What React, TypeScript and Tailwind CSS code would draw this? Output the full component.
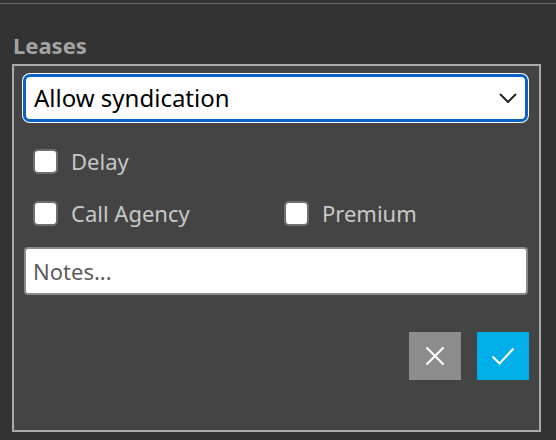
import { useState } from "react";

const Checkbox = ({ label }: { label: string }) => {
  const [checked, setChecked] = useState(false);
  return (
    <label className="flex items-center gap-[13px] cursor-pointer">
      <span
        onClick={() => setChecked(!checked)}
        className="w-[25px] h-[25px] rounded-[5px] bg-white border-2 border-[#6f6f6f] shrink-0"
      />
      <span className="text-[22px] leading-[30px] text-[#c8c8c8]">{label}</span>
    </label>
  );
};

export default function App() {
  return (
    <div
      className="w-[556px] h-[440px] bg-[#333333] overflow-hidden"
      style={{ fontFamily: '"Noto Sans", "Open Sans", sans-serif' }}
    >
      <div className="mt-[3px] h-px bg-[#6e6e6e]" />

      <div className="ml-[13px] mt-[26px] text-[22px] leading-[30px] font-bold text-[#a3a3a3]">
        Leases
      </div>

      <div className="ml-[12px] mt-[4px] w-[529px] h-[368px] border-2 border-[#a9a9a9] bg-[#444444] pl-[9px] pr-[10px] pt-[8px]">
        {/* select */}
        <div className="h-[48px] w-[505px] rounded-[7px] border-[3px] border-[#0a62c9] bg-white shadow-[0_0_0_1px_#ffffff] flex items-center justify-between pl-[8px] pr-[8px]">
          <span className="text-[24px] text-black leading-none">Allow syndication</span>
          <svg width="18" height="10" viewBox="0 0 18 10" fill="none">
            <path d="M1 1l8 8 8-8" stroke="#222" strokeWidth="2" />
          </svg>
        </div>

        <div className="mt-[24px] pl-[10px]">
          <Checkbox label="Delay" />
        </div>

        <div className="mt-[22px] pl-[10px] flex">
          <div className="w-[251px]">
            <Checkbox label="Call Agency" />
          </div>
          <Checkbox label="Premium" />
        </div>

        <input
          placeholder="Notes..."
          className="mt-[19px] block h-[48px] w-[504px] ml-[1px] rounded-[4px] border-2 border-[#8a8a8a] bg-white px-[7px] text-[22px] text-black placeholder:text-[#5c5c5c] outline-none"
        />

        <div className="mt-[37px] flex justify-end gap-[16px] w-[506px]">
          <button className="w-[52px] h-[48px] bg-[#8c8c8c] flex items-center justify-center">
            <svg width="20" height="20" viewBox="0 0 20 20" fill="none">
              <path d="M1.5 1.5l17 17M18.5 1.5l-17 17" stroke="#fff" strokeWidth="2.2" />
            </svg>
          </button>
          <button className="w-[52px] h-[48px] bg-[#00aee8] flex items-center justify-center">
            <svg width="24" height="20" viewBox="0 0 24 20" fill="none">
              <path d="M1.5 10.5l7 7L22.5 2.5" stroke="#fff" strokeWidth="2.2" />
            </svg>
          </button>
        </div>
      </div>
    </div>
  );
}
